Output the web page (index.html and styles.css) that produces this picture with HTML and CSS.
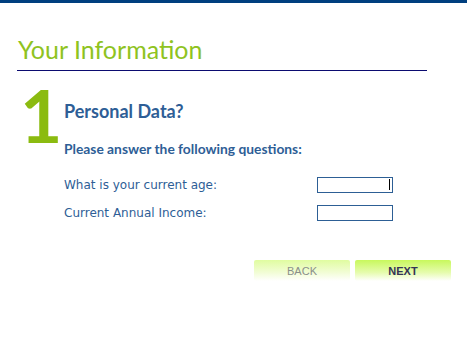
FILE: index.html
```html
<!DOCTYPE html>
<html lang="en">
<head>
<meta charset="utf-8">
<title>Your Information</title>
<link rel="stylesheet" href="styles.css">
</head>
<body>
<div class="topbar"></div>
<div class="page">
  <h1 class="title">Your Information</h1>
  <div class="rule"></div>
  <div class="step">
    <div class="step-num">1</div>
    <div class="step-body">
      <h2 class="step-title">Personal Data?</h2>
      <p class="intro">Please answer the following questions:</p>
      <div class="form">
        <label class="label" for="age">What is your current age:</label>
        <div class="field"><input id="age" class="input" type="text"><span class="caret"></span></div>
        <label class="label" for="income">Current Annual Income:</label>
        <div class="field"><input id="income" class="input" type="text"></div>
      </div>
    </div>
  </div>
  <div class="actions">
    <button class="btn btn-back" type="button">BACK</button>
    <button class="btn btn-next" type="button">NEXT</button>
  </div>
</div>
</body>
</html>
```

FILE: styles.css
```css
html, body {
  margin: 0;
  padding: 0;
  background: #ffffff;
}
body {
  font-family: "Liberation Sans", Arial, sans-serif;
  width: 467px;
  height: 352px;
  overflow: hidden;
}
.topbar {
  height: 3px;
  background: #003f7f;
}
.page {
  padding: 0 40px 0 17px;
}
.title {
  margin: 0;
  padding: 31px 0 0 1px;
  font-family: Lato, "Liberation Sans", sans-serif;
  font-weight: 400;
  font-size: 25px;
  line-height: 30px;
  color: #8fc31f;
  height: 36px;
}
.rule {
  height: 0;
  border-top: 1px solid #0b0b70;
  width: 410px;
}
.step {
  display: flex;
  margin-top: 13px;
}
.step-num {
  width: 47px;
  font-family: Lato, "Liberation Sans", sans-serif;
  font-weight: 700;
  font-size: 73px;
  line-height: 62px;
  color: #8bbb10;
  text-indent: 3px;
}
.step-title {
  margin: 0;
  padding-top: 16px;
  font-family: Lato, "Liberation Sans", sans-serif;
  font-weight: 700;
  font-size: 18px;
  line-height: 22px;
  color: #2e5e96;
}
.intro {
  margin: 18px 0 0;
  font-family: Lato, "Liberation Sans", sans-serif;
  font-weight: 700;
  font-size: 13.8px;
  line-height: 17px;
  color: #2e5e96;
}
.form {
  display: grid;
  grid-template-columns: 253px 76px;
  row-gap: 12px;
  margin-top: 20px;
  align-items: center;
}
.label {
  font-family: "DejaVu Sans", Verdana, sans-serif;
  font-size: 12px;
  color: #2e5e96;
}
.field {
  position: relative;
  height: 16px;
}
.input {
  box-sizing: border-box;
  width: 76px;
  height: 16px;
  margin: 0;
  padding: 0;
  border: 1px solid #2d5f95;
  background: #ffffff;
  display: block;
}
.caret {
  position: absolute;
  left: 72px;
  top: 2px;
  width: 1px;
  height: 11px;
  background: #000000;
}
.actions {
  display: flex;
  justify-content: flex-end;
  gap: 5px;
  margin-top: 39px;
  margin-right: -24px;
}
.btn {
  width: 96px;
  height: 21px;
  border: 0;
  border-radius: 2px;
  padding: 0;
  font-family: "Liberation Sans", Arial, sans-serif;
  font-size: 11px;
  cursor: pointer;
}
.btn-back {
  background: linear-gradient(to bottom, #e0fca0 0%, #f2fdd6 60%, #ffffff 100%);
  color: #8a8f8a;
}
.btn-next {
  background: linear-gradient(to bottom, #c8f85c 0%, #e6fcae 60%, #ffffff 100%);
  color: #333355;
  font-weight: 700;
}
```
